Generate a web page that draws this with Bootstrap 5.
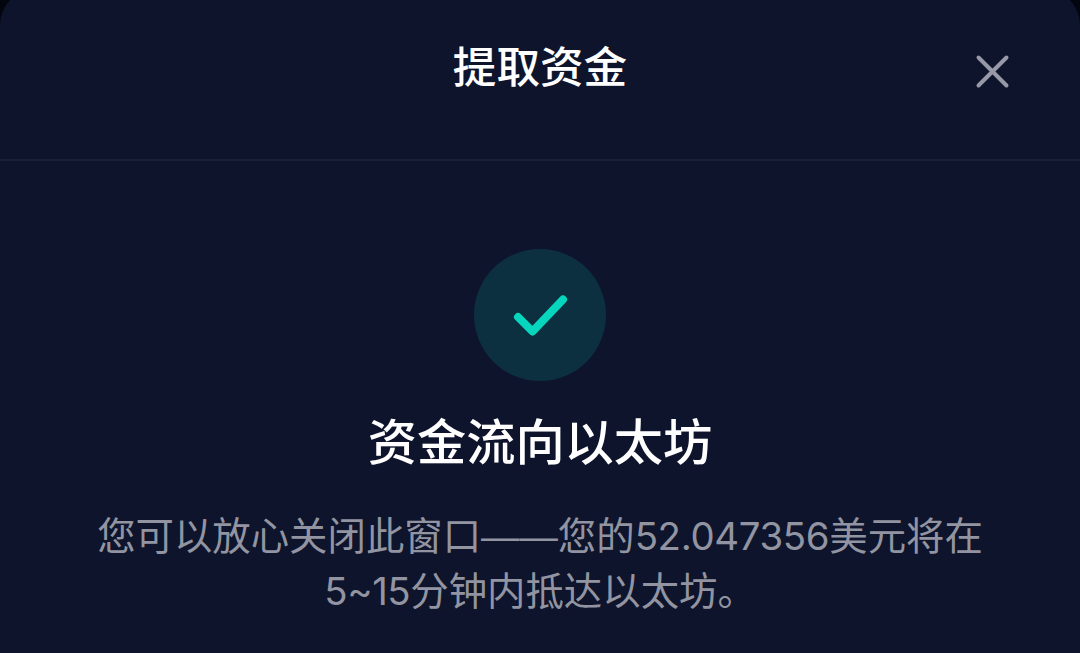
<!DOCTYPE html>
<html lang="zh-CN">
<head>
<meta charset="utf-8">
<meta name="viewport" content="width=device-width, initial-scale=1">
<title>提取资金</title>
<link href="https://cdn.jsdelivr.net/npm/bootstrap@5.3.0/dist/css/bootstrap.min.css" rel="stylesheet">
<style>
html,body{height:100%}
body{background:#03050f;font-family:"Liberation Sans","Noto Sans CJK SC",sans-serif;overflow:hidden}
.sheet{background:#0e142b;border-radius:36px 36px 0 0;height:664px;margin-top:-11px;padding-top:11px;color:#fff}
.sheet-head{height:161px;border-bottom:2px solid #1b2036;display:grid;grid-template-columns:1fr auto 1fr;align-items:start}
.sheet-title{grid-column:2;font-size:43.6px;line-height:64px;margin:36px 0 0;font-weight:500}
.sheet-close{grid-column:3;justify-self:end;margin:54px 70px 0 0;line-height:0;color:#9799a6}
.tick{width:132px;height:132px;background:#0d3041;margin-top:88px}
.headline{font-size:49.2px;line-height:72px;font-weight:500;margin:26px 0 0}
.note{font-size:38.4px;line-height:55px;color:#9294a2;margin:30px 0 0}
.num{font-family:"Inter",sans-serif;font-size:38.4px;letter-spacing:-.35px;line-height:1}
.num-range{letter-spacing:-.4px}
</style>
</head>
<body>
<main class="sheet">
<header class="sheet-head">
<h1 class="sheet-title">提取资金</h1>
<button class="sheet-close btn p-0 border-0" aria-label="关闭"><svg width="35" height="35" viewBox="0 0 35 35" fill="none" stroke="currentColor" stroke-width="4" stroke-linecap="round"><path d="M3.500 3.500 31.500 31.500M31.500 3.500 3.500 31.500"/></svg></button>
</header>
<section class="d-flex flex-column align-items-center text-center">
<div class="tick rounded-circle d-flex align-items-center justify-content-center"><svg width="132" height="132" viewBox="0 0 132 132" fill="none" stroke="#06d6be" stroke-width="8" stroke-linecap="round" stroke-linejoin="round"><path d="M44 68 58.500 82.500 89 50.500"/></svg></div>
<h2 class="headline">资金流向以太坊</h2>
<p class="note text-nowrap">您可以放心关闭此窗口——您的<span class="num">52.047356</span>美元将在<br><span class="num num-range">5~15</span>分钟内抵达以太坊。</p>
</section>
</main>
<script src="https://cdn.jsdelivr.net/npm/bootstrap@5.3.0/dist/js/bootstrap.bundle.min.js"></script>
</body>
</html>
